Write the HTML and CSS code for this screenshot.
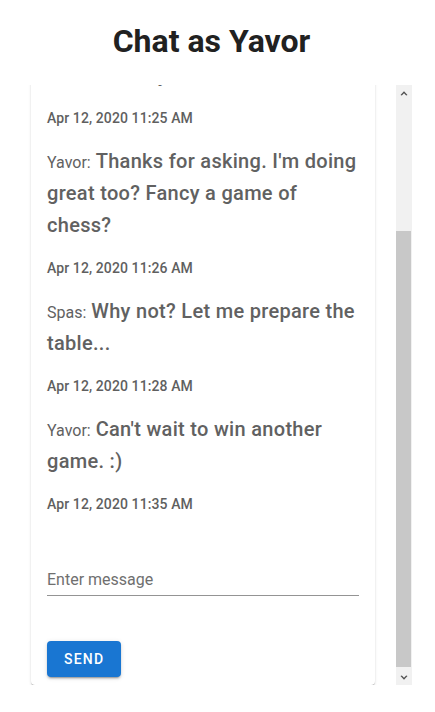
FILE: index.html
```html
<!DOCTYPE html>
<html lang="en">
<head>
<meta charset="utf-8">
<title>Chat as Yavor</title>
<link rel="stylesheet" href="styles.css">
</head>
<body>
<div class="page">
  <h1 class="title">Chat as Yavor</h1>
  <div class="viewport">
    <div class="scroller">
      <div class="card">
        <div class="messages">
          <p class="msg"><span class="name">Spas:</span> <span class="text">Hi Yavor!</span></p>
          <p class="time">Apr 12, 2020 11:24 AM</p>
          <p class="msg"><span class="name">Spas:</span> <span class="text">I'm fine, thanks Yavor! What&nbsp;about you?</span></p>
          <p class="time">Apr 12, 2020 11:25 AM</p>
          <p class="msg"><span class="name">Yavor:</span> <span class="text">Thanks for asking. I'm doing great too? Fancy a game of chess?</span></p>
          <p class="time">Apr 12, 2020 11:26 AM</p>
          <p class="msg"><span class="name">Spas:</span> <span class="text">Why not? Let me prepare the table...</span></p>
          <p class="time">Apr 12, 2020 11:28 AM</p>
          <p class="msg"><span class="name">Yavor:</span> <span class="text">Can't wait to win another game. :)</span></p>
          <p class="time">Apr 12, 2020 11:35 AM</p>
        </div>
        <div class="field">
          <input class="input" type="text" placeholder="Enter message">
        </div>
        <div class="actions">
          <button class="send" type="button">Send</button>
        </div>
      </div>
    </div>
    <div class="scrollbar" aria-hidden="true">
      <div class="sb-btn">
        <svg width="8" height="6" viewBox="0 0 8 6"><path d="M0.5 5 L4 1.3 L7.5 5 L6.2 5.6 L4 3.3 L1.8 5.6 Z" fill="#505050"/></svg>
      </div>
      <div class="sb-track">
        <div class="sb-thumb"></div>
      </div>
      <div class="sb-btn">
        <svg width="8" height="6" viewBox="0 0 8 6"><path d="M0.5 1 L4 4.7 L7.5 1 L6.2 0.4 L4 2.7 L1.8 0.4 Z" fill="#505050"/></svg>
      </div>
    </div>
  </div>
</div>
</body>
</html>
```

FILE: styles.css
```css
html, body {
  margin: 0;
  padding: 0;
  background: #fff;
}
body {
  font-family: Roboto, "Liberation Sans", Arial, sans-serif;
  color: #616161;
}
.page {
  display: flex;
  flex-direction: column;
}
.title {
  width: 423px;
  margin: 0;
  padding-top: 21px;
  font-size: 32px;
  line-height: 40px;
  font-weight: 700;
  text-align: center;
  color: #212121;
}
.viewport {
  margin-top: 24px;
  height: 600px;
  display: flex;
}
.scroller {
  margin-left: 23px;
  width: 373px;
  height: 600px;
  overflow-y: scroll;
  overflow-x: hidden;
  scrollbar-width: none;
  display: flex;
  flex-direction: column-reverse;
}
.scroller::-webkit-scrollbar {
  width: 0;
  height: 0;
}
.card {
  flex-shrink: 0;
  width: 344px;
  margin-left: 8px;
  box-sizing: border-box;
  padding: 18px 16px 8px;
  background: #fff;
  border-radius: 4px;
  box-shadow: 0 2px 1px -1px rgba(0,0,0,0.2), 0 1px 1px 0 rgba(0,0,0,0.14), 0 1px 3px 0 rgba(0,0,0,0.12);
}
.messages {
  display: flex;
  flex-direction: column;
  gap: 16px;
}
.msg {
  margin: 0;
  font-size: 20px;
  line-height: 32px;
}
.name {
  font-size: 16px;
  line-height: 16px;
  font-weight: 400;
}
.text {
  font-weight: 500;
  letter-spacing: 0.3px;
}
.time {
  margin: 0;
  font-size: 14px;
  line-height: 22px;
  font-weight: 500;
  letter-spacing: 0.1px;
  color: #5f5f5f;
}
.field {
  margin-top: 48px;
}
.input {
  display: block;
  width: 100%;
  box-sizing: border-box;
  height: 33px;
  margin: 0;
  padding: 0;
  border: none;
  border-bottom: 1px solid #949494;
  outline: none;
  font-family: inherit;
  font-size: 16px;
  color: #212121;
  background: transparent;
}
.input::placeholder {
  color: #6f6f6f;
  opacity: 1;
}
.actions {
  margin-top: 45px;
  display: flex;
}
.send {
  height: 36px;
  padding: 0 17px;
  border: none;
  border-radius: 4px;
  background: #1976d2;
  color: #fff;
  font-family: inherit;
  font-size: 14px;
  font-weight: 500;
  letter-spacing: 1.2px;
  text-transform: uppercase;
  box-shadow: 0 3px 1px -2px rgba(0,0,0,0.2), 0 2px 2px 0 rgba(0,0,0,0.14), 0 1px 5px 0 rgba(0,0,0,0.12);
}
.scrollbar {
  width: 16px;
  height: 600px;
  background: #f1f1f1;
  display: flex;
  flex-direction: column;
}
.sb-btn {
  height: 15px;
  flex-shrink: 0;
  display: flex;
  align-items: center;
  justify-content: center;
}
.sb-track {
  flex: 1;
  display: flex;
  flex-direction: column;
}
.sb-thumb {
  margin-top: 131px;
  height: 436px;
  width: 15px;
  background: #c8c8c8;
}
```
